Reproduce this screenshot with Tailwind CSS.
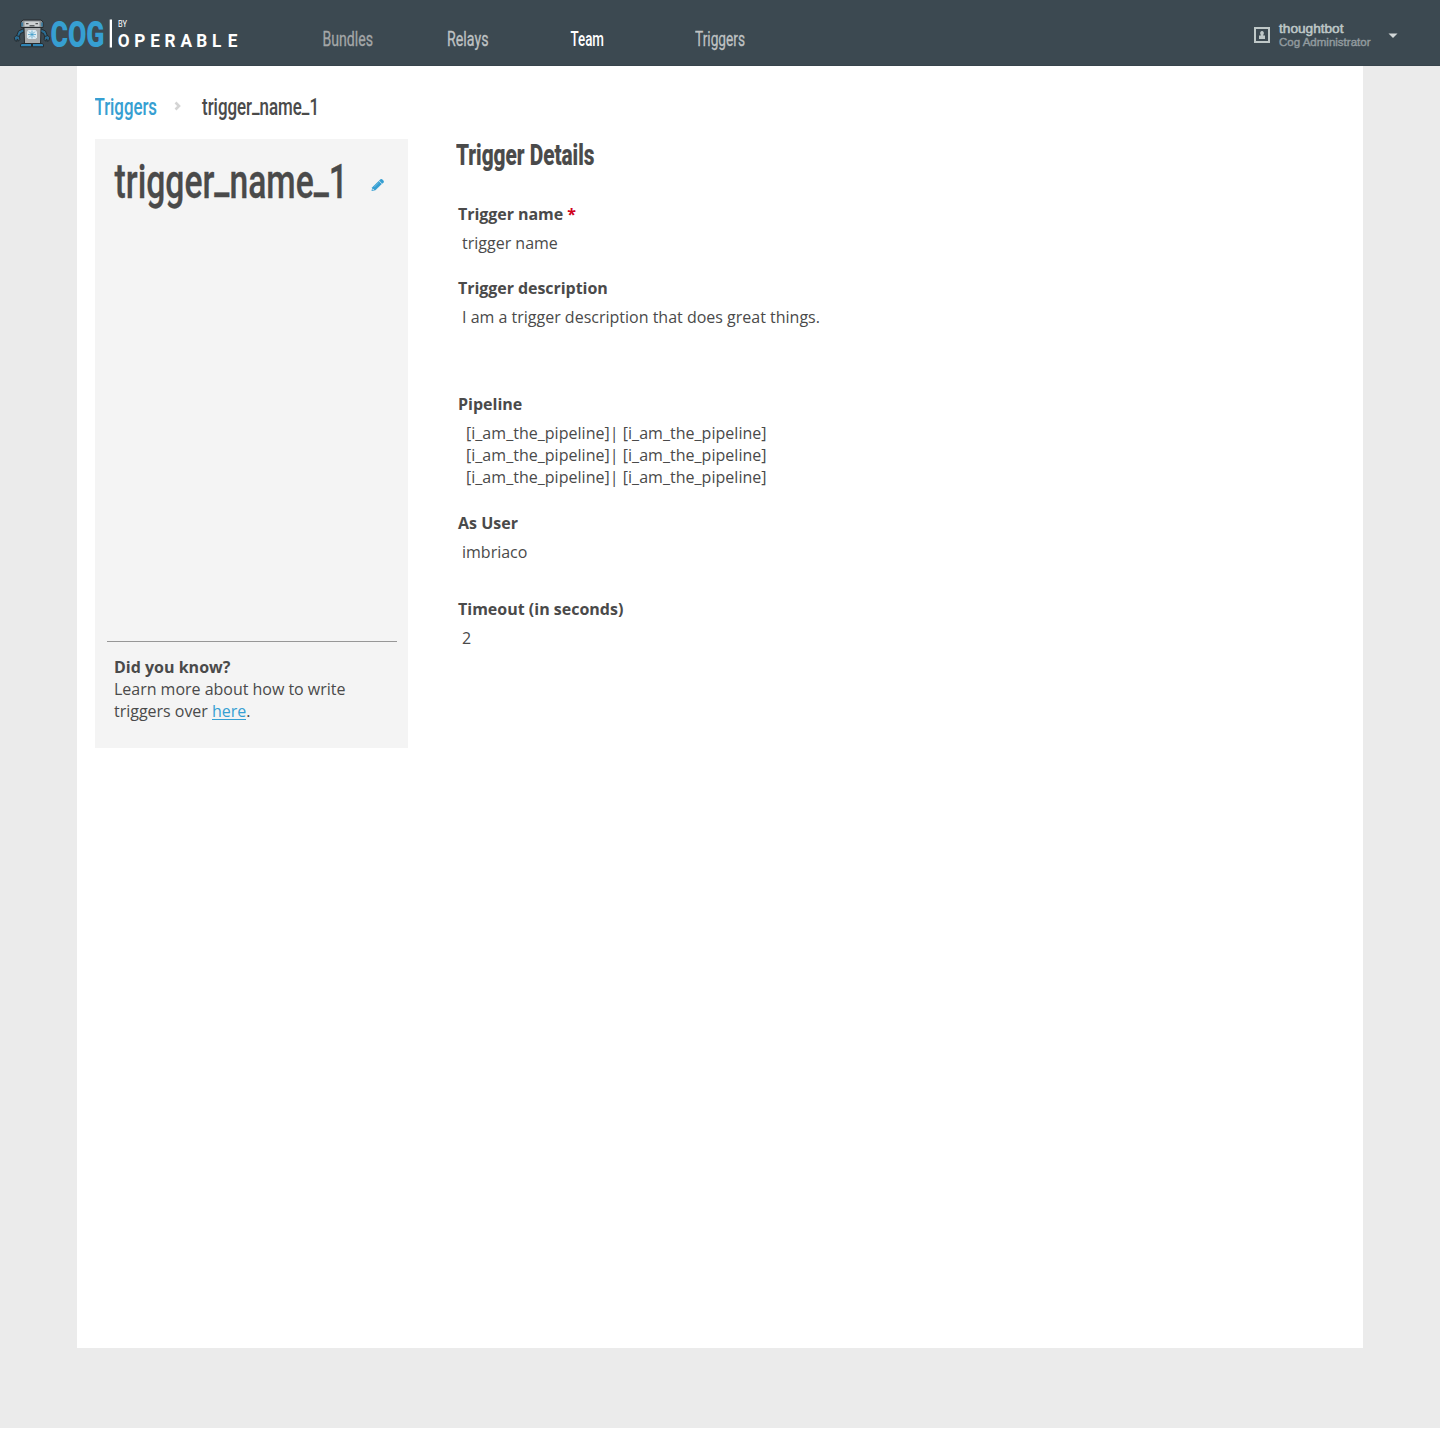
<!DOCTYPE html>
<html lang="en">
<head>
<meta charset="utf-8">
<title>Cog – Trigger Details</title>
<script src="https://cdn.jsdelivr.net/npm/@tailwindcss/browser@4"></script>
</head>
<body class="bg-white font-['Open_Sans',sans-serif] text-base leading-[22px] text-[#4a4a4a]">
<div class="h-[1428px] bg-[#ebebeb]">
  <header class="flex h-[66px] bg-[#3c4951] border-b border-[#37444c]">
    <svg class="h-[65px] w-[322px] shrink-0 overflow-visible" viewBox="0 0 322 65" font-family="Roboto, sans-serif">
      <!-- robot -->
      <g stroke="#262b2e" stroke-width="1">
        <path d="M24 28.500l-5.500 2.500-2 5 2.500 1.500 1.500-4 3.500-1.500zM40 28.500l5.500 2.500 2 5-2.500 1.500-1.500-4-3.500-1.500z" fill="#2a6c92"/>
        <path d="M16 35.500l-1.700 2.200.8 3 1.600.6.300-2 1 .2.200 1.800 1.600-1.600-.3-3.200zM48 35.500l1.700 2.200-.8 3-1.600.6-.3-2-1 .2-.2 1.800-1.600-1.600.3-3.200z" fill="#2a6c92"/>
        <path d="M23 20h18l2 2v5.500H21V22z" fill="#8d9396"/>
        <path d="M24 27.500h17l-.5 16h-16z" fill="#a7abad"/>
        <path d="M20.500 46.800v-2.300l1.500-1h9.500v3.300zM43.500 46.800v-2.300l-1.500-1h-9.500v3.300z" fill="#2f84b5"/>
      </g>
      <path d="M21.300 22.500h1.500v4h-1.500zM41.300 22.500h1.500v4h-1.500z" fill="#2f79a3"/>
      <path d="M24.500 21.500h15v5h-15z" fill="#cdd1d2"/>
      <path d="M26 23.700h2.500M35.500 23.700H38M29.500 25.800h5" stroke="#303436"/>
      <path d="M28.500 30h7l1.500 1.500v6l-1.500 1.500h-7l-1.500-1.500v-6z" fill="#dceaf1"/>
      <path d="M32 30.500v8M28 34.500h8M29.200 31.700l5.600 5.600M34.800 31.700l-5.600 5.600" stroke="#3d9cc9" stroke-width=".7"/>
      <text x="50.500" y="47" font-size="37.500" font-weight="900" fill="#369fd2" textLength="54" lengthAdjust="spacingAndGlyphs">COG</text>
      <path d="M109.700 19.500h2.300v28h-2.300z" fill="#fff"/>
      <text x="118" y="26.500" font-size="9.500" fill="#fff" textLength="9" lengthAdjust="spacingAndGlyphs">BY</text>
      <g transform="scale(.93 1)"><text x="126.500 144.300 161.500 177 194 211 228 245" y="47" font-size="18.500" font-weight="700" fill="#fff">OPERABLE</text></g>
    </svg>
    <nav class="flex h-[65px]">
      <a class="w-[125px]"><svg class="h-[65px] w-full" font-family="Roboto, sans-serif" font-size="19.500"><text x="0.500" y="45.500" fill="#a4a7a8" stroke="#a4a7a8" stroke-width=".3" textLength="50.500" lengthAdjust="spacingAndGlyphs">Bundles</text></svg></a>
      <a class="w-[123px]"><svg class="h-[65px] w-full" font-family="Roboto, sans-serif" font-size="19.500"><text x="0" y="45.500" fill="#bfc2c3" stroke="#bfc2c3" stroke-width=".3" textLength="41.500" lengthAdjust="spacingAndGlyphs">Relays</text></svg></a>
      <a class="w-[125px]"><svg class="h-[65px] w-full" font-family="Roboto, sans-serif" font-size="19.500"><text x="0.500" y="45.500" fill="#fff" font-weight="500" textLength="33.500" lengthAdjust="spacingAndGlyphs">Team</text></svg></a>
      <a class="w-[70px]"><svg class="h-[65px] w-full" font-family="Roboto, sans-serif" font-size="19.500"><text x="0" y="45.500" fill="#bfc2c3" stroke="#bfc2c3" stroke-width=".3" textLength="50" lengthAdjust="spacingAndGlyphs">Triggers</text></svg></a>
    </nav>
    <svg class="ml-auto h-[65px] w-[190px]" viewBox="1250 0 190 65" font-family="'Liberation Sans', sans-serif">
      <path d="M1255 28h14v14h-14z" fill="none" stroke="#bfc8c8" stroke-width="2"/>
      <path d="M1262 31a2 2 0 0 1 1.500 3.200l-.3 1.300h1.800v3.500h-6v-3.500h1.800l-.3-1.300A2 2 0 0 1 1262 31z" fill="#bfc8c8"/>
      <text x="1279" y="33" font-size="12.500" fill="#bfc8c8" stroke="#bfc8c8" stroke-width=".5" textLength="64.500" lengthAdjust="spacingAndGlyphs">thoughtbot</text>
      <text x="1279" y="46" font-size="11" fill="#929b9f" stroke="#929b9f" stroke-width=".4" textLength="91.500" lengthAdjust="spacingAndGlyphs">Cog Administrator</text>
      <path d="M1388.500 33.500h9l-4.500 4.500z" fill="#d2d7d8"/>
    </svg>
  </header>

  <main class="mx-[77px] h-[1282px] bg-white px-[18px]">
    <div class="flex h-[73px]">
      <svg class="h-[73px] w-[330px]" font-family="Roboto, sans-serif" font-size="24">
        <text x="-0.500" y="48.500" fill="#369fd2" stroke="#369fd2" stroke-width=".1" font-weight="500" textLength="62.500" lengthAdjust="spacingAndGlyphs">Triggers</text>
        <path d="M80.500 36.500l3.500 3.500-3.500 3.500" fill="none" stroke="#d4d4d4" stroke-width="2.600"/>
        <text x="107" y="48.500" dy="0 0 0 0 0 0 0 -2 2 0 0 0 -2 2" fill="#4a4a4a" stroke="#4a4a4a" stroke-width=".1" font-weight="500" textLength="117" lengthAdjust="spacingAndGlyphs">trigger_name_1</text>
      </svg>
    </div>
    <div class="flex">
      <aside class="flex h-[609px] w-[313px] flex-col justify-between bg-[#f4f4f4]">
        <svg class="h-[80px] w-full overflow-visible" font-family="Roboto, sans-serif">
          <text x="19.500" y="58.500" dy="0 0 0 0 0 0 0 -4.500 4.500 0 0 0 -4.500 4.500" font-size="48" fill="#4a4a4a" stroke="#4a4a4a" stroke-width=".3" font-weight="500" textLength="233.500" lengthAdjust="spacingAndGlyphs">trigger_name_1</text>
          <g transform="translate(276.500 40)">
            <path d="M0 12l.8-3.800 6.400-6.300 3.100 3.100-6.400 6.300z" fill="#369fd2"/>
            <path d="M7.500 1.600L9 .2q.8-.6 1.600.1l1.500 1.500q.7.8 0 1.600l-1.400 1.400z" fill="#369fd2"/>
            <path d="M1.200 9.400l1.500 1.400-1.300.3-.5-.5z" fill="#f4f4f4"/>
            <path d="M2.800 8l4.600-4.600" stroke="#a5d6ec" stroke-width=".5"/>
          </g>
        </svg>
        <div class="mx-3 mr-[11px] h-[107px] border-t border-[#979797] pl-[7px] pt-[14px]">
          <p class="font-bold">Did you know?</p>
          <p class="tracking-[-0.02px]">Learn more about how to write<br>triggers over <a class="inline-block border-b border-[#369fd2] leading-[16px] text-[#369fd2]">here</a>.</p>
        </div>
      </aside>
      <section class="ml-12 flex-1">
        <h1><svg class="h-[64px] w-[300px]" font-family="Roboto, sans-serif"><text x="0" y="25.500" font-size="29" font-weight="800" fill="#4a4a4a" stroke="#4a4a4a" stroke-width=".2" textLength="138.500" lengthAdjust="spacingAndGlyphs">Trigger Details</text></svg></h1>
        <dl class="pl-[2px]">
          <dt class="font-bold tracking-[-0.05px]">Trigger name <span class="text-[#d0021b]">*</span></dt>
          <dd class="mt-[7px] pl-1">trigger name</dd>
          <dt class="mt-[23px] font-bold tracking-[-0.05px]">Trigger description</dt>
          <dd class="mt-[7px] pl-1">I am a trigger description that does great things.</dd>
          <dt class="mt-[65px] font-bold">Pipeline</dt>
          <dd class="mt-[7px] pl-2 tracking-[0.03px]">[i_am_the_pipeline]| [i_am_the_pipeline]<br>[i_am_the_pipeline]| [i_am_the_pipeline]<br>[i_am_the_pipeline]| [i_am_the_pipeline]</dd>
          <dt class="mt-6 font-bold">As User</dt>
          <dd class="mt-[7px] pl-1">imbriaco</dd>
          <dt class="mt-[35px] font-bold">Timeout (in seconds)</dt>
          <dd class="mt-[7px] pl-1">2</dd>
        </dl>
      </section>
    </div>
  </main>
</div>
</body>
</html>
